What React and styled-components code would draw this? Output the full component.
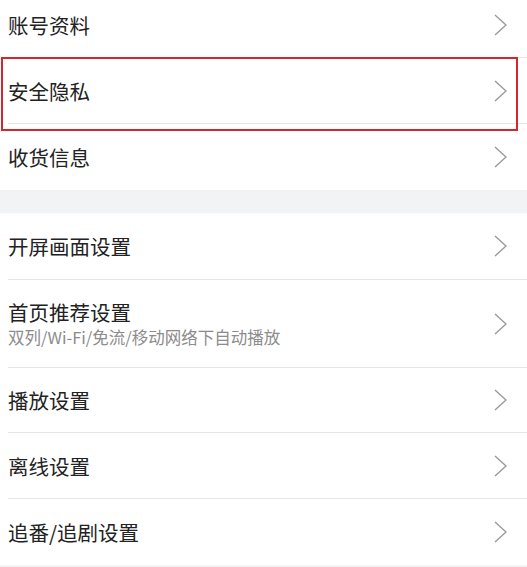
import React from 'react'
import styled, { createGlobalStyle } from 'styled-components'

// Settings list, two white sections on a light grey page

const GlobalStyle = createGlobalStyle`
  body {
    margin: 0;
    background-color: #f2f3f5;
    font-family: "Noto Sans CJK SC", "Noto Sans", sans-serif;
  }
`

const Page = styled.div`
  margin-top: -8px;
  position: relative;
`

const Section = styled.div`
  background-color: #ffffff;
  margin-bottom: ${props => props.$gap || 0}px;
`

const Row = styled.div`
  padding-left: 8px;
  background-color: #ffffff;
`

const RowInner = styled.div`
  height: ${props => props.$height || 66}px;
  box-sizing: border-box;
  display: flex;
  align-items: center;
  justify-content: space-between;
  padding-right: 20px;
  border-bottom: ${props => props.$last ? 'none' : '1px solid #e6e6e6'};
`

const Texts = styled.div`
  display: flex;
  flex-direction: column;
`

const Title = styled.div`
  font-size: 20.5px;
  line-height: 26px;
  color: #222222;
`

const Subtitle = styled.div`
  font-size: 16.5px;
  line-height: 22px;
  color: #8c8c8c;
  margin-top: 1px;
`

const Chevron = styled.svg`
  width: 13px;
  height: 22px;
  flex-shrink: 0;
`

// red highlight frame drawn over the second row
const Highlight = styled.div`
  position: absolute;
  left: 1px;
  top: 65px;
  width: 517px;
  height: 74px;
  box-sizing: border-box;
  border: 2px solid #d4262c;
  pointer-events: none;
`

function Arrow () {
  return (
    <Chevron viewBox='0 0 13 22'>
      <polyline points='1,1 12,11 1,21' fill='none' stroke='#9a9a9a' strokeWidth='1.4' />
    </Chevron>
  )
}

function Item ({ title, subtitle, height, last }) {
  return (
    <Row>
      <RowInner $height={height} $last={last}>
        <Texts>
          <Title>{title}</Title>
          {subtitle && <Subtitle>{subtitle}</Subtitle>}
        </Texts>
        <Arrow />
      </RowInner>
    </Row>
  )
}

export default function App () {
  return (
    <Page>
      <GlobalStyle />
      <Section $gap={23}>
        <Item title='账号资料' />
        <Item title='安全隐私' />
        <Item title='收货信息' last />
      </Section>
      <Section>
        <Item title='开屏画面设置' height={67} />
        <Item title='首页推荐设置' subtitle='双列/Wi-Fi/免流/移动网络下自动播放' height={88} />
        <Item title='播放设置' height={65} />
        <Item title='离线设置' />
        <Item title='追番/追剧设置' last />
      </Section>
      <Highlight />
    </Page>
  )
}
